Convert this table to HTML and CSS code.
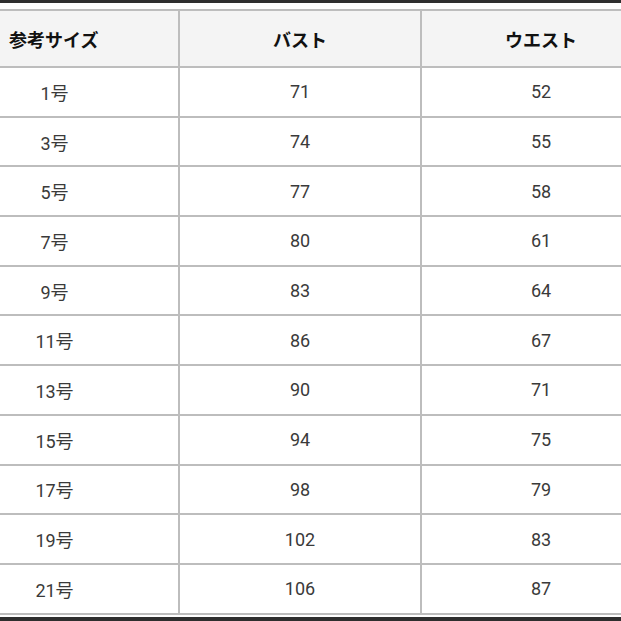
FILE: index.html
```html
<!DOCTYPE html>
<html lang="ja">
<head>
<meta charset="utf-8">
<link rel="stylesheet" href="styles.css">
</head>
<body>
<div class="bar"></div>
<div class="wrap">
<table class="size-table">
<colgroup><col class="c1"><col class="c2"><col class="c3"></colgroup>
<thead>
<tr><th class="first">参考サイズ</th><th>バスト</th><th>ウエスト</th></tr>
</thead>
<tbody>
<tr><td class="first">1号</td><td>71</td><td>52</td></tr>
<tr><td class="first">3号</td><td>74</td><td>55</td></tr>
<tr><td class="first">5号</td><td>77</td><td>58</td></tr>
<tr><td class="first">7号</td><td>80</td><td>61</td></tr>
<tr><td class="first">9号</td><td>83</td><td>64</td></tr>
<tr><td class="first">11号</td><td>86</td><td>67</td></tr>
<tr><td class="first">13号</td><td>90</td><td>71</td></tr>
<tr><td class="first">15号</td><td>94</td><td>75</td></tr>
<tr><td class="first">17号</td><td>98</td><td>79</td></tr>
<tr><td class="first">19号</td><td>102</td><td>83</td></tr>
<tr><td class="first">21号</td><td>106</td><td>87</td></tr>
</tbody>
</table>
</div>
<div class="bar bottom"></div>
</body>
</html>
```
FILE: styles.css
```css
html, body {
  margin: 0;
  padding: 0;
  background: #ffffff;
  overflow: hidden;
  width: 621px;
  height: 621px;
}
body {
  font-family: "Noto Sans CJK JP", "Noto Sans", sans-serif;
  position: relative;
}
.bar {
  height: 3px;
  background: #2e2e2e;
}
.bar.bottom {
  position: absolute;
  left: 0;
  right: 0;
  bottom: 0;
  height: 4px;
}
.wrap {
  padding-top: 6px;
  width: 621px;
  overflow: hidden;
}
.size-table {
  border-collapse: collapse;
  table-layout: fixed;
  width: 663px;
  margin-left: -3px;
}
.c1 { width: 181px; }
.c2 { width: 242px; }
.c3 { width: 240px; }
.size-table th,
.size-table td {
  border: 2px solid #bdbdbd;
  padding: 0;
  text-align: center;
  vertical-align: middle;
}
.size-table th {
  height: 55px;
  background: #f4f4f4;
  color: #111111;
  font-weight: 700;
  font-size: 18px;
}
.size-table th.first {
  text-align: left;
  padding-left: 10px;
}
.size-table td {
  height: 47.7px;
  color: #3a3a3a;
  font-size: 18px;
  font-family: "Roboto", "Noto Sans CJK JP", sans-serif;
}
.size-table td.first {
  padding-right: 68px;
}
```
